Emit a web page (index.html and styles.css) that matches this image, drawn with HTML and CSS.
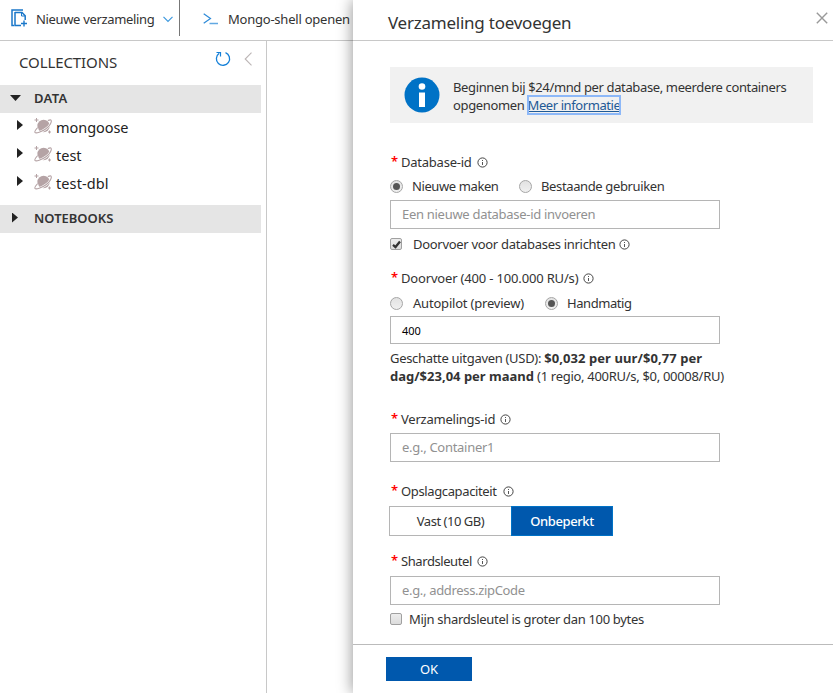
FILE: index.html
```
<!DOCTYPE html>
<html lang="nl">
<head>
<meta charset="utf-8">
<title>Verzameling toevoegen</title>
<link rel="stylesheet" href="styles.css">
</head>
<body>
<svg class="defs" width="0" height="0" aria-hidden="true">
  <symbol id="info" viewBox="0 0 11 11"><circle cx="5.5" cy="5.5" r="4.6" fill="none" stroke="#444" stroke-width="1"/><path d="M5.5 5v3M5.5 3v1" stroke="#555" stroke-width="1"/></symbol>
  <symbol id="planet" viewBox="0 0 18 18"><circle cx="9.600" cy="8" r="6.200" fill="#b5a3a5"/><path d="M3.700 9.500C1.600 11.800.4 13.800 1 14.500c1 1.100 6.500-.4 11-3.700S17.900 3.300 17.100 2.200c-.4-.6-1.700-.3-3.300.4" fill="none" stroke="#fff" stroke-width="2.300"/><path d="M3.700 9.500C1.600 11.800.4 13.800 1 14.500c1 1.100 6.500-.4 11-3.700S17.900 3.300 17.100 2.200c-.4-.6-1.700-.3-3.300.4" fill="none" stroke="#b5a3a5" stroke-width="1.100"/><path d="M2.500 0v4M.5 2h4M15.500 12.500v3M14 14h3" stroke="#b5a3a5" stroke-width="1"/></symbol>
</svg>
<div class="app">
  <div class="explorer">
    <header class="toolbar">
      <div class="command new">
        <svg class="ico-new" width="17" height="19" viewBox="0 0 17 19" fill="none" stroke="#1a77c9"><path d="M3 16.500H1V1h11" stroke-width="1.500"/><path d="M4 3.500h7l3.200 3.200V11M4 3v13.500h6" stroke-width="1.500"/><path d="M10.500 3.500V7H14" stroke-width="1"/><path d="M13 11.500v6M10 14.500h6" stroke-width="1.400"/></svg>
        <span class="t-new">Nieuwe verzameling</span>
        <svg class="ico-down" width="10" height="7" viewBox="0 0 10 7" fill="none" stroke="#3d99de"><path d="M.5.800 5 5.500 9.500.800" stroke-width="1.200"/></svg>
      </div>
      <div class="command shell">
        <svg width="16" height="12" viewBox="0 0 16 12" fill="none" stroke="#2d8ad8"><path d="M.7.700 7.500 5.500.7 10.300" stroke-width="1.200"/><path d="M6.500 10.500H15" stroke="#62a8e2" stroke-width="1.500"/></svg>
        <span class="t-shell">Mongo-shell openen</span>
      </div>
    </header>
    <nav class="tree">
      <div class="tree-head">
        <span class="t-coll">COLLECTIONS</span>
        <svg class="ico-refresh" width="16" height="16" viewBox="0 0 16 16" fill="none" stroke="#1580d8"><path d="M10.500 1.600A6.600 6.600 0 1 1 4.200 2.300" stroke-width="1.300"/><path d="M1.500 1.500h4v4" stroke-width="1.200"/></svg>
        <svg width="9" height="14" viewBox="0 0 9 14" fill="none" stroke="#bcb5b5"><path d="M7.500.700 1.200 7l6.300 6.300" stroke-width="1.100"/></svg>
      </div>
      <div class="section"><i class="arrow down"></i><span class="t-data">DATA</span></div>
      <ul>
        <li><i class="arrow"></i><svg width="18" height="18"><use href="#planet"/></svg><span class="t-mongoose">mongoose</span></li>
        <li><i class="arrow"></i><svg width="18" height="18"><use href="#planet"/></svg><span class="t-test">test</span></li>
        <li><i class="arrow"></i><svg width="18" height="18"><use href="#planet"/></svg><span class="t-dbl">test-dbl</span></li>
      </ul>
      <div class="section"><i class="arrow"></i><span class="t-note">NOTEBOOKS</span></div>
    </nav>
  </div>
  <section class="pane">
    <header class="pane-head">
      <h1>Verzameling toevoegen</h1>
      <svg width="12" height="12" viewBox="0 0 12 12" stroke="#999" stroke-width="1.400"><path d="M.8.800l10.400 10.400M11.200.800.8 11.200"/></svg>
    </header>
    <form class="form">
      <div class="notice">
        <svg width="36" height="36" viewBox="0 0 36 36"><circle cx="18" cy="18" r="17.500" fill="#0072c6"/><circle cx="18" cy="9.500" r="3.300" fill="#fff"/><path d="M15 15.500h6V30h-6z" fill="#fff"/></svg>
        <p><span class="t-n1">Beginnen bij $24/mnd per database, meerdere containers</span><br><span class="t-n2">opgenomen </span><a class="t-link">Meer informatie</a></p>
      </div>

      <div class="label l-db"><b>*</b><span class="t-db">Database-id</span><svg><use href="#info"/></svg></div>
      <div class="options o-db">
        <i class="radio on"></i><span class="t-make">Nieuwe maken</span>
        <i class="radio"></i><span class="t-use">Bestaande gebruiken</span>
      </div>
      <div class="field"><span class="t-ph1">Een nieuwe database-id invoeren</span></div>
      <div class="check c-1"><i class="box"><svg width="11" height="11" viewBox="0 0 11 11"><path d="M2 5.800 4.500 8 9 2.500" fill="none" stroke="#333" stroke-width="2.300"/></svg></i><span class="t-prov">Doorvoer voor databases inrichten</span><svg class="tip"><use href="#info"/></svg></div>

      <div class="label l-ru"><b>*</b><span class="t-ru">Doorvoer (400 - 100.000 RU/s)</span><svg><use href="#info"/></svg></div>
      <div class="options o-ru">
        <i class="radio"></i><span class="t-auto">Autopilot (preview)</span>
        <i class="radio on"></i><span class="t-hand">Handmatig</span>
      </div>
      <div class="field value"><span class="t-400">400</span></div>
      <p class="cost"><span class="t-c1">Geschatte uitgaven (USD): </span><strong class="t-c2">$0,032 per uur/$0,77 per</strong><br><strong class="t-c3">dag/$23,04 per maand</strong><span class="t-c4"> (1 regio, 400RU/s, $0, 00008/RU)</span></p>

      <div class="label l-id"><b>*</b><span class="t-id">Verzamelings-id</span><svg><use href="#info"/></svg></div>
      <div class="field"><span class="t-ph2">e.g., Container1</span></div>

      <div class="label l-cap"><b>*</b><span class="t-cap">Opslagcapaciteit</span><svg><use href="#info"/></svg></div>
      <div class="toggle"><span class="fixed"><span class="t-fixed">Vast (10 GB)</span></span><span class="unlimited"><span class="t-unl">Onbeperkt</span></span></div>

      <div class="label l-shard"><b>*</b><span class="t-shard">Shardsleutel</span><svg><use href="#info"/></svg></div>
      <div class="field"><span class="t-ph3">e.g., address.zipCode</span></div>
      <div class="check c-2"><i class="box"></i><span class="t-big">Mijn shardsleutel is groter dan 100 bytes</span></div>
    </form>
    <footer><button type="button">OK</button></footer>
  </section>
</div>
</body>
</html>
```
FILE: styles.css
```
* { box-sizing: border-box; }
body { margin: 0; background: #fff; color: #333; font: 13px/18px "Noto Sans", sans-serif; white-space: nowrap; overflow: hidden; }
svg { display: block; flex: none; }
.defs { position: absolute; }
p, h1, ul { margin: 0; padding: 0; font-weight: normal; list-style: none; }

.app { display: flex; width: 833px; height: 693px; }
.explorer { width: 353px; flex: none; display: flex; flex-direction: column; overflow: hidden; }
.toolbar { height: 41px; border-bottom: 1px solid #c8c8c8; display: flex; align-items: flex-start; flex: none; }
.command { display: flex; align-items: center; height: 36px; padding-top: 2px; flex: none; }
.new { width: 180px; border-right: 1px solid #777; padding-left: 11px; }
.ico-new { margin-right: 8px; margin-top: -2px; }
.t-new { width: 119px; }
.ico-down { margin-left: 8px; }
.shell { padding-left: 23px; gap: 9px; }

.tree { width: 267px; flex: 1; border-right: 1px solid #c8c8c8; }
.tree-head { height: 44px; display: flex; align-items: flex-start; padding: 11px 13px 0 19px; }
.tree-head span { font-size: 15px; line-height: 20px; width: 196px; }
.ico-refresh { margin: -1px 13px 0 0; }
.section { width: 261px; height: 28px; background: #e5e5e5; display: flex; align-items: center; font-weight: 600; padding: 0 0 2px 12px; }
.arrow { width: 6px; height: 10px; background: #222; clip-path: polygon(0 0, 100% 50%, 0 100%); flex: none; margin: -1px 16px 0 0; }
.arrow.down { width: 11px; height: 6px; clip-path: polygon(0 0, 100% 0, 50% 100%); margin: 0 13px 0 -2px; }
.tree ul { padding: 0 0 8px 17px; }
.tree li { display: flex; align-items: center; height: 28px; font-size: 14.5px; color: #222; }
.tree li .arrow { margin: -4px 11px 0 0; }
.tree li svg { margin: -1px 4px 0 0; }

.pane { flex: 1; display: flex; flex-direction: column; background: #fff; position: relative; box-shadow: -1px 0 14px rgba(0, 0, 0, .4); }
.pane-head { height: 41px; flex: none; border-bottom: 1px solid #c8c8c8; display: flex; justify-content: space-between; padding: 12px 5px 0 35px; }
.pane-head h1 { font-size: 17px; line-height: 22px; letter-spacing: -.24px; }
.form { padding: 26px 20px 0 37px; height: 603px; display: flex; flex-direction: column; }
.form > * { flex: none; }
.notice { height: 56px; background: #f1f1f1; display: flex; align-items: center; padding: 0 0 0 14px; gap: 13px; }
.notice p { padding-top: 2px; }
.notice a { color: #1f5a96; text-decoration: underline; outline: 2px solid #8db8f8; outline-offset: -1px; }

.label { height: 20px; display: flex; align-items: center; }
.label b { width: 11px; padding-left: 1px; color: #f00; font: 600 13px/16px "Noto Sans", sans-serif; margin-top: -3px; }
.label svg, .tip { width: 11px; height: 11px; margin-left: 5px; }
.label.l-cap svg { margin-left: 6px; }
.options { height: 26px; display: flex; align-items: center; }
.radio { width: 13px; height: 13px; border-radius: 50%; border: 1px solid #a6a6a6; background: linear-gradient(#e2e2e2, #f0f0f0); flex: none; margin-right: 9px; display: flex; align-items: center; justify-content: center; }
.radio.on::after { content: ""; width: 7px; height: 7px; border-radius: 50%; background: #555; }
span + .radio { margin-left: 20px; }
.field { width: 330px; height: 29px; border: 1px solid #b5b5b5; padding: 0 0 1px 11px; color: #919191; display: flex; align-items: center; }
.field.value { height: 28px; color: #000; font-size: 11px; padding-top: 2px; }
.check { display: flex; align-items: center; height: 30px; }
.box { width: 12px; height: 12px; border: 1px solid #a0a0a0; border-radius: 2px; background: linear-gradient(#ededed, #dcdcdc); flex: none; }
.box svg { margin: -.5px; }
.c-1 .box { margin-right: 11px; }
.c-2 .box { margin-right: 7px; }
.c-2 { height: 28px; }
.check .tip { margin-left: 3px; }
.cost { margin-top: 5px; }

.l-db { margin-top: 29px; }
.o-db { margin: 1px 0; }
.l-ru { margin-top: 9px; }
.o-ru { margin-top: 2px; }
.l-id { margin: 24px 0 4px; }
.l-cap { margin: 19px 0 5px; }
.l-shard { margin: 15px 0 5px; }
.toggle { display: flex; height: 30px; margin-left: -1px; }
.toggle > span { display: flex; align-items: center; justify-content: center; border: 1px solid #b5b5b5; }
.toggle .fixed { width: 122px; border-right: 0; }
.toggle .unlimited { width: 102px; background: #0058ad; border-color: #0072c6; color: #fff; font-weight: 500; }
footer { flex: 1; border-top: 1px solid #bbb; padding: 12px 33px; }
button { display: block; width: 86px; height: 24px; border: 0; padding: 0; background: #0058ad; color: #fff; font: 13px/24px "Noto Sans", sans-serif; }

/* Tracking per text run */
.t-new { letter-spacing: -.34px; }
.t-shell { letter-spacing: -.23px; }
.t-coll { letter-spacing: -.1px; }
.t-data { letter-spacing: .3px; }
.t-mongoose { letter-spacing: -.05px; }
.t-dbl { letter-spacing: .1px; }
.t-n1 { letter-spacing: -.37px; }
.t-n2 { letter-spacing: -.35px; }
.t-link { letter-spacing: -.41px; }
.t-db, .t-id { letter-spacing: -.23px; }
.t-make { letter-spacing: -.4px; width: 87px; }
.t-use { letter-spacing: -.37px; }
.t-ph1, .t-ph2 { letter-spacing: -.29px; }
.t-prov { letter-spacing: -.3px; }
.t-ru { letter-spacing: -.17px; }
.t-auto { letter-spacing: -.2px; width: 112px; margin-left: 1px; }
.t-hand { letter-spacing: -.44px; }
.t-c1 { letter-spacing: -.31px; }
.t-c2 { letter-spacing: .08px; }
.t-c4 { letter-spacing: -.3px; }
.t-cap { letter-spacing: -.37px; }
.t-fixed { letter-spacing: -.47px; }
.t-unl { letter-spacing: -.4px; }
.t-shard { letter-spacing: -.42px; }
.t-ph3 { letter-spacing: -.33px; }
.t-big { letter-spacing: -.32px; }
```
